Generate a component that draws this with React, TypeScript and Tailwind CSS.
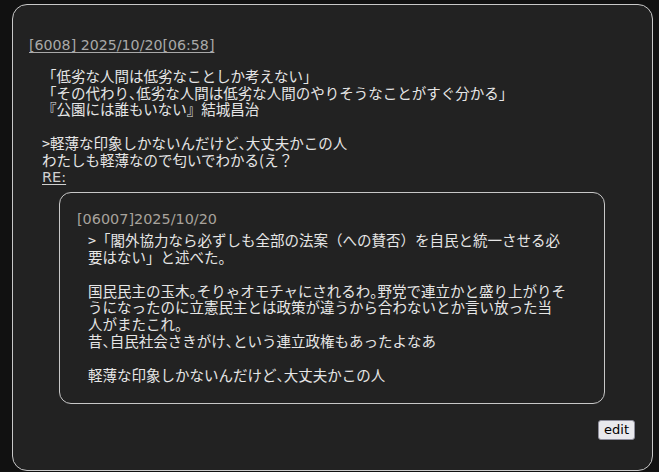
import React from "react";

const jp = { fontFamily: '"Noto Sans CJK JP", sans-serif' };
const lat = { fontFamily: '"DejaVu Sans", "Noto Sans CJK JP", sans-serif' };

function T({ children }: { children: string }) {
  const parts = children.split(/([、。])/);
  return (
    <>
      {parts.map((p, i) =>
        p === "、" || p === "。" ? (
          <span key={i} className="[font-feature-settings:'halt']">
            {p}
          </span>
        ) : (
          <React.Fragment key={i}>{p}</React.Fragment>
        )
      )}
    </>
  );
}

export default function App() {
  return (
    <div className="w-[659px] h-[472px] bg-[#111111] pt-[4px] pl-[12px]" style={jp}>
      <div className="w-[641px] h-[467px] rounded-[15px] border border-[#c8c8c8] bg-[#222222] pl-[16px] pr-[17px] pt-[32px] text-[14.5px] leading-[16.8px] text-[#e6e6e6]">
        <div style={lat}>
          <a className="text-[14.2px] text-[#a9a9a9] underline underline-offset-2">[6008] 2025/10/20[06:58]</a>
        </div>
        <div className="mt-[14px] pl-[13px] whitespace-nowrap">
          <div>「低劣な人間は低劣なことしか考えない」</div>
          <div><T>「その代わり、低劣な人間は低劣な人間のやりそうなことがすぐ分かる」</T></div>
          <div>『公園には誰もいない』結城昌治</div>
          <div>&nbsp;</div>
          <div><T>&gt;軽薄な印象しかないんだけど、大丈夫かこの人</T></div>
          <div>わたしも軽薄なので匂いでわかる(え？</div>
          <div style={lat}>
            <a className="text-[#d0d0d0] underline underline-offset-2">RE:</a>
          </div>
        </div>
        <div className="ml-[30px] mt-[7px] w-[546px] rounded-[12px] border border-[#c8c8c8] pl-[17px] pr-[10px] pt-[18px] pb-[20px]">
          <div className="text-[14.4px] text-[#a8a39c]" style={lat}>[06007]2025/10/20</div>
          <div className="mt-[4px] pl-[11px] whitespace-nowrap">
            <div>&gt;「閣外協力なら必ずしも全部の法案（への賛否）を自民と統一させる必<br />要はない」と述べた。</div>
            <div>&nbsp;</div>
            <div><T>国民民主の玉木。そりゃオモチャにされるわ。野党で連立かと盛り上がりそ</T><br />うになったのに立憲民主とは政策が違うから合わないとか言い放った当<br /><T>人がまたこれ。</T></div>
            <div><T>昔、自民社会さきがけ、という連立政権もあったよなあ</T></div>
            <div>&nbsp;</div>
            <div><T>軽薄な印象しかないんだけど、大丈夫かこの人</T></div>
          </div>
        </div>
        <div className="mt-[16px] flex justify-end" style={lat}>
          <button className="h-[20px] rounded-[3px] border border-[#8f8f9d] bg-[#e9e9ed] px-[5px] text-[13px] leading-[18px] text-black">edit</button>
        </div>
      </div>
    </div>
  );
}
